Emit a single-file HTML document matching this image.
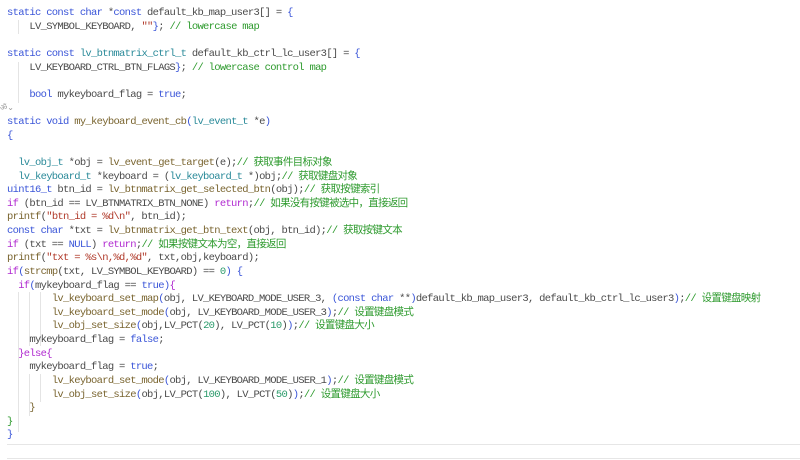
<!DOCTYPE html>
<html><head><meta charset="utf-8"><style>
body{margin:0;width:800px;height:460px;background:#fff;overflow:hidden;position:relative}
pre{margin:0;position:absolute;left:7px;top:7px;font-family:"Liberation Mono","Noto Sans CJK SC",monospace;font-size:10.5px;letter-spacing:-0.7px;line-height:13.63px;color:#4a4a4a;white-space:pre}
.k{color:#3a55d8}.f{color:#7a6530}.t{color:#2a8a99}.c{color:#2d9a2d}.s{color:#b03a2a}.p{color:#b02ad0}.n{color:#2a9a6a}.v{color:#555}
.g{position:absolute;width:1px;background:#e4e4e4}
.fold{position:absolute;left:0;font-size:8px;color:#999;font-family:"Liberation Sans",sans-serif}
</style></head><body>
<div class="g" style="left:18px;top:20px;height:14px"></div>
<div class="g" style="left:18px;top:62px;height:41px"></div>
<div class="g" style="left:18px;top:292px;height:140px"></div>
<div class="g" style="left:29px;top:292px;height:54px"></div>
<div class="g" style="left:40px;top:292px;height:54px"></div>
<div class="g" style="left:29px;top:374px;height:42px"></div>
<div class="g" style="left:40px;top:374px;height:28px"></div>
<div style="position:absolute;left:7px;right:0;top:444px;height:13px;border-top:1px solid #e6e6e6;border-bottom:1px solid #e6e6e6"></div>
<pre><span class="k">static const char</span> *<span class="k">const</span> default_kb_map_user3[] = <span class="k">{</span>
    LV_SYMBOL_KEYBOARD, <span class="s">""</span><span class="k">}</span>; <span class="c">// lowercase map</span>

<span class="k">static const</span> <span class="t">lv_btnmatrix_ctrl_t</span> default_kb_ctrl_lc_user3[] = <span class="k">{</span>
    LV_KEYBOARD_CTRL_BTN_FLAGS<span class="k">}</span>; <span class="c">// lowercase control map</span>

    <span class="k">bool</span> mykeyboard_flag = <span class="k">true</span>;

<span class="k">static void</span> <span class="f">my_keyboard_event_cb</span><span class="k">(</span><span class="t">lv_event_t</span> *e<span class="k">)</span>
<span class="k">{</span>

  <span class="t">lv_obj_t</span> *obj = <span class="f">lv_event_get_target</span>(e);<span class="c">// 获取事件目标对象</span>
  <span class="t">lv_keyboard_t</span> *keyboard = (<span class="t">lv_keyboard_t</span> *)obj;<span class="c">// 获取键盘对象</span>
<span class="k">uint16_t</span> btn_id = <span class="f">lv_btnmatrix_get_selected_btn</span>(obj);<span class="c">// 获取按键索引</span>
<span class="p">if</span> (btn_id == LV_BTNMATRIX_BTN_NONE) <span class="p">return</span>;<span class="c">// 如果没有按键被选中，直接返回</span>
<span class="f">printf</span>(<span class="s">"btn_id = %d\n"</span>, btn_id);
<span class="k">const char</span> *txt = <span class="f">lv_btnmatrix_get_btn_text</span>(obj, btn_id);<span class="c">// 获取按键文本</span>
<span class="p">if</span> (txt == <span class="k">NULL</span>) <span class="p">return</span>;<span class="c">// 如果按键文本为空，直接返回</span>
<span class="f">printf</span>(<span class="s">"txt = %s\n,%d,%d"</span>, txt,obj,keyboard);
<span class="p">if</span><span class="k">(</span><span class="f">strcmp</span>(txt, LV_SYMBOL_KEYBOARD) == <span class="n">0</span><span class="k">)</span> <span class="k">{</span>
  <span class="p">if</span><span class="k">(</span>mykeyboard_flag == <span class="k">true</span><span class="k">)</span><span class="p">{</span>
        <span class="f">lv_keyboard_set_map</span><span class="k">(</span>obj, LV_KEYBOARD_MODE_USER_3, <span class="k">(const char</span> **<span class="k">)</span>default_kb_map_user3, default_kb_ctrl_lc_user3<span class="k">)</span>;<span class="c">// 设置键盘映射</span>
        <span class="f">lv_keyboard_set_mode</span><span class="k">(</span>obj, LV_KEYBOARD_MODE_USER_3<span class="k">)</span>;<span class="c">// 设置键盘模式</span>
        <span class="f">lv_obj_set_size</span><span class="k">(</span>obj,LV_PCT(<span class="n">20</span>), LV_PCT(<span class="n">10</span>)<span class="k">)</span>;<span class="c">// 设置键盘大小</span>
    mykeyboard_flag = <span class="k">false</span>;
  <span class="p">}else{</span>
    mykeyboard_flag = <span class="k">true</span>;
        <span class="f">lv_keyboard_set_mode</span><span class="k">(</span>obj, LV_KEYBOARD_MODE_USER_1<span class="k">)</span>;<span class="c">// 设置键盘模式</span>
        <span class="f">lv_obj_set_size</span><span class="k">(</span>obj,LV_PCT(<span class="n">100</span>), LV_PCT(<span class="n">50</span>)<span class="k">)</span>;<span class="c">// 设置键盘大小</span>
    <span class="f">}</span>
<span class="c">}</span>
<span class="k">}</span></pre>
<div class="fold" style="top:102px">ॐ⌄</div>
</body></html>
